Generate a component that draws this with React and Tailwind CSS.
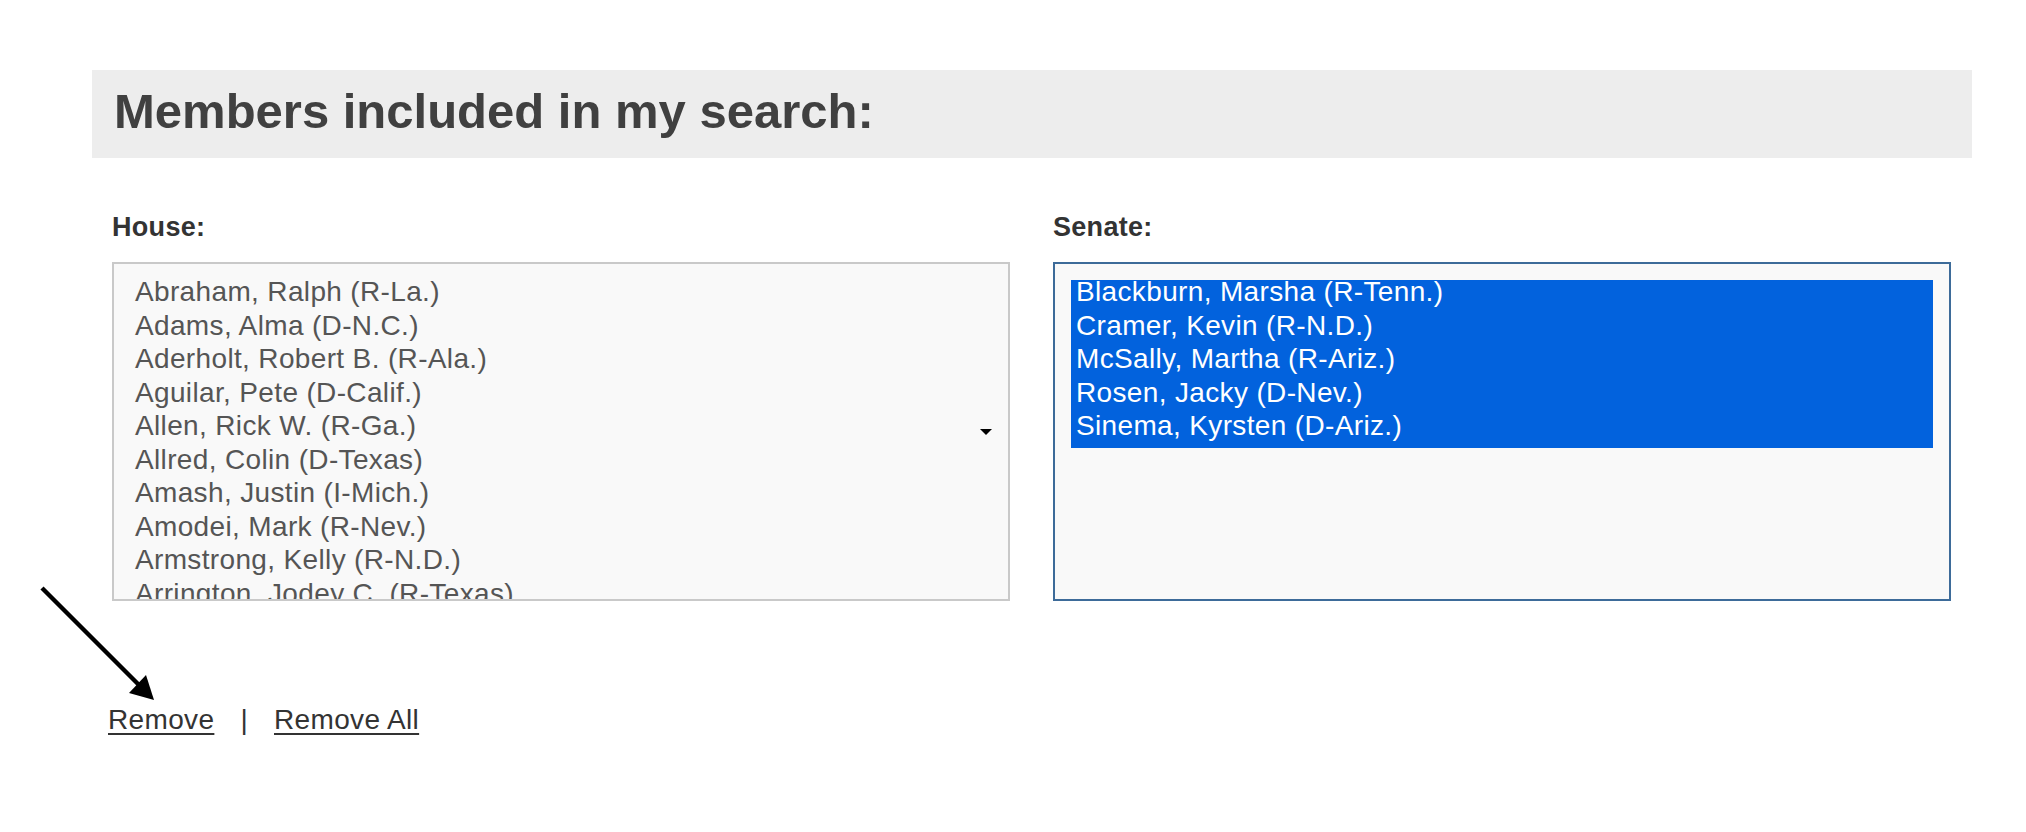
import React from "react";

const houseMembers = [
  "Abraham, Ralph (R-La.)",
  "Adams, Alma (D-N.C.)",
  "Aderholt, Robert B. (R-Ala.)",
  "Aguilar, Pete (D-Calif.)",
  "Allen, Rick W. (R-Ga.)",
  "Allred, Colin (D-Texas)",
  "Amash, Justin (I-Mich.)",
  "Amodei, Mark (R-Nev.)",
  "Armstrong, Kelly (R-N.D.)",
  "Arrington, Jodey C. (R-Texas)",
  "Axne, Cindy (D-Iowa)",
  "Babin, Brian (R-Texas)",
];

const senateMembers = [
  "Blackburn, Marsha (R-Tenn.)",
  "Cramer, Kevin (R-N.D.)",
  "McSally, Martha (R-Ariz.)",
  "Rosen, Jacky (D-Nev.)",
  "Sinema, Kyrsten (D-Ariz.)",
];

const MemberSearch = () => {
  return (
    <div className="relative w-[2026px] min-h-[832px] bg-white font-['Liberation_Sans',Arial,sans-serif]">
      <div className="pt-[70px] pl-[92px] w-[1972px]">
        {/* heading bar */}
        <div className="h-[88px] bg-[#ededed] flex items-center pl-[22px] pb-[5px]">
          <h2 className="text-[49px] leading-[49px] font-bold text-[#404040]">
            Members included in my search:
          </h2>
        </div>

        <div className="mt-[56px] pl-[20px] pr-[21px] grid grid-cols-2 gap-[43px]">
          <div>
            <div className="text-[27px] leading-[27px] font-bold text-[#333] tracking-[0.3px] mb-[21px]">
              House:
            </div>
            <div className="relative h-[339px] border-2 border-[#c9c9c9] bg-[#f9f9f9] p-[16px] overflow-hidden">
              {houseMembers.map((name) => (
                <div
                  key={name}
                  className="px-[5px] text-[28px] leading-[24px] pb-[9.5px] tracking-[0.35px] text-[#555] whitespace-nowrap"
                >
                  {name}
                </div>
              ))}
              <svg
                className="absolute right-[16px] top-1/2 -translate-y-1/2"
                width="12"
                height="6"
                viewBox="0 0 12 6"
              >
                <polygon points="0,0 12,0 6,6" fill="#000" />
              </svg>
            </div>
          </div>

          <div>
            <div className="text-[27px] leading-[27px] font-bold text-[#333] tracking-[0.3px] mb-[21px]">
              Senate:
            </div>
            <div className="h-[339px] border-2 border-[#3d6b99] bg-[#f9f9f9] p-[16px] overflow-hidden">
              {senateMembers.map((name) => (
                <div
                  key={name}
                  className="px-[5px] text-[28px] leading-[24px] pb-[9.5px] tracking-[0.35px] bg-[#0262dd] text-white whitespace-nowrap"
                >
                  {name}
                </div>
              ))}
            </div>
          </div>
        </div>

        <div className="mt-[102px] ml-[16px] flex items-center text-[28px] leading-[34px] tracking-[0.35px] text-[#333]">
          <span className="underline decoration-[2px] underline-offset-[4px]">Remove</span>
          <span className="mx-[26px]">|</span>
          <span className="underline decoration-[2px] underline-offset-[4px]">Remove All</span>
        </div>
      </div>

      {/* pointer arrow */}
      <svg
        className="absolute left-0 top-[560px]"
        width="200"
        height="160"
        viewBox="0 0 200 160"
      >
        <line x1="42" y1="28" x2="140" y2="126" stroke="#000" strokeWidth="4.5" />
        <polygon points="154,140 129,133 146,115" fill="#000" />
      </svg>
    </div>
  );
};

export default MemberSearch;
